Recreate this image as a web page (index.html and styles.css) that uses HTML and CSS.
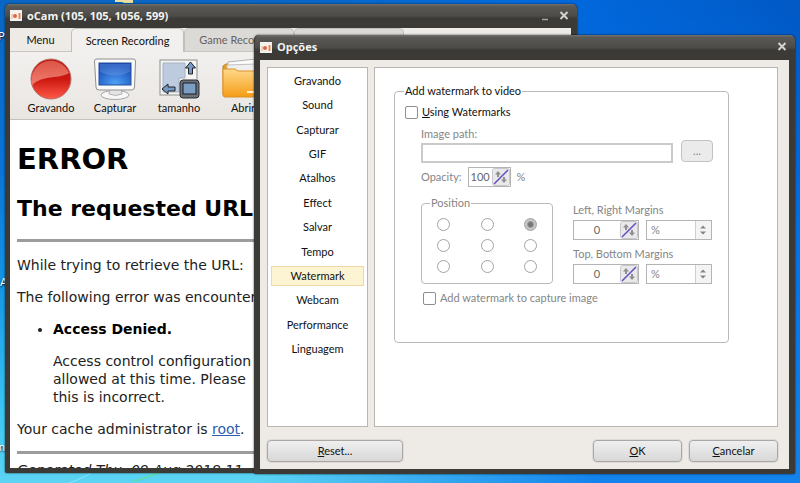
FILE: index.html
```
<!DOCTYPE html>
<html lang="pt">
<head>
    <meta charset="UTF-8">
    <meta name="viewport" content="width=device-width, initial-scale=1.0">
    <title>oCam</title>
    <link rel="stylesheet" href="styles.css">
</head>
<body>
    <div class="desktop">
        <svg class="desktop-swoosh" viewBox="0 0 200 14" aria-hidden="true">
            <path d="M64 14 Q84 7 92 0" stroke="#b8f4fc" stroke-width="1" fill="none" opacity=".6"/>
            <path d="M140 12 Q158 6 176 0" stroke="#62d9a8" stroke-width="2" fill="none"/>
        </svg>
        <svg class="desktop-folder" viewBox="0 0 18 3" aria-hidden="true">
            <path d="M0 0h18v3H9L7 2H0z" fill="#e9dfa0"/>
        </svg>
        <span class="desktop-label label-one">P</span>
        <span class="desktop-label label-two">A</span>
        <span class="desktop-label label-three">in</span>

        <!-- Main window -->
        <section class="window main-window">
            <header class="titlebar">
                <svg class="app-icon" viewBox="0 0 12 11" aria-hidden="true">
                    <rect width="12" height="11" fill="#f6f1ec"/>
                    <circle cx="5" cy="6" r="2" fill="#d9683c"/>
                    <path d="M2 4v5" stroke="#e0b09a"/>
                    <path d="M9.500 3v6" stroke="#e08a62" stroke-width="2"/>
                </svg>
                <h1 class="title">oCam (105, 105, 1056, 599)</h1>
                <button class="title-button" aria-label="Minimize">
                    <svg viewBox="0 0 10 10"><path d="M2 8.500h6" stroke="#a5a4a0" stroke-width="1.500"/></svg>
                </button>
                <button class="title-button" aria-label="Close">
                    <svg viewBox="0 0 10 10"><path d="M1.500 1l7 7M8.500 1l-7 7" stroke="#d4d3d0" stroke-width="2"/></svg>
                </button>
            </header>
            <div class="window-body">
                <nav class="tabs">
                    <button class="tab menu-tab">Menu</button>
                    <button class="tab active">Screen Recording</button>
                    <button class="tab inactive">Game Recording</button>
                    <button class="tab inactive" aria-label="Audio Recording"></button>
                </nav>
                <div class="toolbar">
                    <button class="tool">
                        <svg viewBox="0 0 42 42" aria-hidden="true">
                            <defs>
                                <linearGradient id="redBase" x1="0" y1="0" x2="0" y2="1">
                                    <stop offset="0" stop-color="#b81a14"/>
                                    <stop offset=".5" stop-color="#cc1710"/>
                                    <stop offset="1" stop-color="#ff5a48"/>
                                </linearGradient>
                                <linearGradient id="redShine" x1="0" y1="0" x2="0" y2="1">
                                    <stop offset="0" stop-color="#dc5546"/>
                                    <stop offset="1" stop-color="#f07c6e"/>
                                </linearGradient>
                            </defs>
                            <circle cx="21" cy="21" r="20" fill="url(#redBase)" stroke="#b9726c"/>
                            <path d="M2 27A19.500 19.500 0 0 1 39 15Q34 18 24 19Q9 20 2 27z" fill="url(#redShine)"/>
                        </svg>
                        Gravando
                    </button>
                    <button class="tool">
                        <svg viewBox="0 0 42 42" aria-hidden="true">
                            <defs>
                                <radialGradient id="screen" cx=".5" cy=".9" r=".8">
                                    <stop offset="0" stop-color="#4fa0f4"/>
                                    <stop offset="1" stop-color="#1448b4"/>
                                </radialGradient>
                            </defs>
                            <ellipse cx="21" cy="37" rx="14" ry="4.500" fill="#f7f7f7" stroke="#a6a6a6"/>
                            <path d="M16 30h11l1 6q-6 3-13 0z" fill="#e4e4e4" stroke="#b5b5b5"/>
                            <path d="M3 1h36q2.500 0 2.500 2l-1 26q0 3-3 3H5q-3 0-3-3L.5 3q0-2 2.500-2z" fill="#fafafa" stroke="#8f8f8f"/>
                            <rect x="5" y="5" width="32" height="22" fill="url(#screen)" stroke="#27509b"/>
                            <path d="M6 6h30v8Q21 21 6 14z" fill="#7ba9ee" opacity=".35"/>
                        </svg>
                        Capturar
                    </button>
                    <button class="tool">
                        <svg viewBox="0 0 42 42" aria-hidden="true">
                            <rect x="2" y="2" width="37" height="35" fill="#f4f4f3" stroke="#8d8d8d"/>
                            <path d="M5 5h22v15h-6v14H5z" fill="#bccbdd" stroke="#a6b2c0"/>
                            <path d="M32.500 4l5 6h-3v6h-4v-6h-3z" fill="#7599c1" stroke="#20242a"/>
                            <path d="M4 31l6-5v3h7v4h-7v3z" fill="#7599c1" stroke="#20242a"/>
                            <rect x="22" y="22" width="19" height="18" rx="3" fill="#6b7178" stroke="#292c30"/>
                            <rect x="25" y="25" width="13" height="11" fill="#7c9dc4" stroke="#1b1e22"/>
                        </svg>
                        tamanho
                    </button>
                    <button class="tool">
                        <svg viewBox="0 0 42 42" aria-hidden="true">
                            <defs>
                                <linearGradient id="folder" x1="0" y1="0" x2="0" y2="1">
                                    <stop offset="0" stop-color="#ffd98a"/>
                                    <stop offset="1" stop-color="#f59c16"/>
                                </linearGradient>
                            </defs>
                            <path d="M1 8l3-2h7l3 3h26v29H3q-2 0-2-2z" fill="#e99b22" stroke="#c9811a"/>
                            <path d="M6 4l28-3 3 12H6z" fill="#fbfbfb" stroke="#b3b3b3"/>
                            <path d="M5 7l30-1v8H5z" fill="#efefef" stroke="#c0c0c0"/>
                            <path d="M1 11h12l3 2h25v25q0 1-2 1H3q-2 0-2-2z" fill="url(#folder)" stroke="#dc9124"/>
                            <path d="M25 34h13" stroke="#fff0c8" stroke-width="2"/>
                        </svg>
                        Abrir
                    </button>
                </div>
                <article class="error-page">
                    <h2 class="error-title">ERROR</h2>
                    <h3 class="error-subtitle">The requested URL could not be retrieved</h3>
                    <hr>
                    <p>While trying to retrieve the URL:</p>
                    <p>The following error was encountered:</p>
                    <ul>
                        <li>
                            <strong>Access Denied.</strong>
                            <p>Access control configuration<br>allowed at this time. Please<br>this is incorrect.</p>
                        </li>
                    </ul>
                    <p>Your cache administrator is <a href="#">root</a>.</p>
                    <hr>
                    <div class="generated">Generated Thu, 09 Aug 2018 11:</div>
                </article>
            </div>
        </section>

        <!-- Options dialog -->
        <section class="window options-window">
            <header class="titlebar">
                <svg class="app-icon" viewBox="0 0 12 11" aria-hidden="true">
                    <rect width="12" height="11" fill="#f6f1ec"/>
                    <circle cx="5" cy="6" r="2" fill="#d9683c"/>
                    <path d="M2 4v5" stroke="#e0b09a"/>
                    <path d="M9.500 3v6" stroke="#e08a62" stroke-width="2"/>
                </svg>
                <h1 class="title">Opções</h1>
                <button class="title-button" aria-label="Close">
                    <svg viewBox="0 0 10 10"><path d="M1.500 1l7 7M8.500 1l-7 7" stroke="#d4d3d0" stroke-width="2"/></svg>
                </button>
            </header>
            <form class="window-body options-body">
                <div class="options-main">
                    <nav class="sidebar">
                        <a href="#">Gravando</a>
                        <a href="#">Sound</a>
                        <a href="#">Capturar</a>
                        <a href="#">GIF</a>
                        <a href="#">Atalhos</a>
                        <a href="#">Effect</a>
                        <a href="#">Salvar</a>
                        <a href="#">Tempo</a>
                        <a href="#" class="selected">Watermark</a>
                        <a href="#">Webcam</a>
                        <a href="#">Performance</a>
                        <a href="#">Linguagem</a>
                    </nav>
                    <div class="panel">
                        <fieldset class="group watermark">
                            <legend>Add watermark to video</legend>
                            <label class="check"><input type="checkbox"><span><u>U</u>sing Watermarks</span></label>
                            <div class="settings">
                                <label for="path">Image path:</label>
                                <div class="path-row">
                                    <input type="text" id="path" class="field" disabled>
                                    <button type="button" class="button browse" disabled>...</button>
                                </div>
                                <div class="opacity-row">
                                    <label for="opacity">Opacity:</label>
                                    <div class="spinner small">
                                        <input type="text" id="opacity" value="100" disabled>
                                        <svg viewBox="0 0 18 18" aria-hidden="true"><use href="#spin"/></svg>
                                    </div>
                                    <span>%</span>
                                </div>
                                <div class="placement">
                                    <fieldset class="group position" disabled>
                                        <legend>Position</legend>
                                        <input type="radio" name="position" aria-label="Top left">
                                        <input type="radio" name="position" aria-label="Top center">
                                        <input type="radio" name="position" aria-label="Top right" checked>
                                        <input type="radio" name="position" aria-label="Middle left">
                                        <input type="radio" name="position" aria-label="Middle center">
                                        <input type="radio" name="position" aria-label="Middle right">
                                        <input type="radio" name="position" aria-label="Bottom left">
                                        <input type="radio" name="position" aria-label="Bottom center">
                                        <input type="radio" name="position" aria-label="Bottom right">
                                    </fieldset>
                                    <div class="margins">
                                        <label for="margin-x">Left, Right Margins</label>
                                        <div class="margin-row">
                                            <div class="spinner">
                                                <input type="text" id="margin-x" value="0" disabled>
                                                <svg viewBox="0 0 18 18" aria-hidden="true"><use href="#spin"/></svg>
                                            </div>
                                            <div class="unit">
                                                <select aria-label="Left, right unit" disabled><option>%</option></select>
                                                <svg viewBox="0 0 16 18" aria-hidden="true"><use href="#arrows"/></svg>
                                            </div>
                                        </div>
                                        <label for="margin-y">Top, Bottom Margins</label>
                                        <div class="margin-row">
                                            <div class="spinner">
                                                <input type="text" id="margin-y" value="0" disabled>
                                                <svg viewBox="0 0 18 18" aria-hidden="true"><use href="#spin"/></svg>
                                            </div>
                                            <div class="unit">
                                                <select aria-label="Top, bottom unit" disabled><option>%</option></select>
                                                <svg viewBox="0 0 16 18" aria-hidden="true"><use href="#arrows"/></svg>
                                            </div>
                                        </div>
                                    </div>
                                </div>
                                <label class="check"><input type="checkbox" disabled><span>Add watermark to capture image</span></label>
                            </div>
                        </fieldset>
                    </div>
                </div>
                <footer class="actions">
                    <button type="button" class="button reset"><span><u>R</u>eset...</span></button>
                    <button type="button" class="button"><span><u>O</u>K</span></button>
                    <button type="button" class="button"><span><u>C</u>ancelar</span></button>
                </footer>
            </form>
        </section>
    </div>

    <!-- Shared control icons -->
    <svg class="symbols" aria-hidden="true">
        <symbol id="spin" viewBox="0 0 18 18">
            <rect x=".5" y=".5" width="17" height="17" rx="2" fill="#e9e8ea" stroke="#c8c8cc"/>
            <path d="M6 3l3 3.500H7V9H5V6.500H3zM12 15l-3-3.500h2V9h2v2.500h2z" fill="#8f8f8f"/>
            <path d="M2 16L16 2" stroke="#6a50c4" stroke-width="1.600"/>
        </symbol>
        <symbol id="arrows" viewBox="0 0 16 18">
            <path d="M0 0h16v18H0z" fill="#f4f4f4"/>
            <path d="M.5 0v18" stroke="#cfcfcf"/>
            <path d="M8 4.500l3 3H5zM8 13.500l3-3H5z" fill="#858585"/>
        </symbol>
    </svg>
</body>
</html>
```

FILE: styles.css
```
* {
    box-sizing: border-box;
}
body {
    margin: 0;
    font-family: Lato, "Open Sans", sans-serif;
    font-size: 11px;
    line-height: 16px;
    color: #111;
}
button, input, select {
    font: inherit;
    color: inherit;
    margin: 0;
}
/* Desktop */
.desktop {
    position: relative;
    height: 100vh;
    overflow: hidden;
    background:
        linear-gradient(to right, transparent 32%, rgba(0, 110, 235, 0.8) 75%),
        linear-gradient(#0966c4, #0a74d6 35%, #1597e6 60%, #3cc4f2 85%, #5cd4f3);
}
.desktop::before {
    content: "";
    position: absolute;
    inset: 0;
    background: linear-gradient(to right, transparent 65%, rgba(0, 60, 150, 0.4));
    -webkit-mask-image: linear-gradient(#000, transparent 50%);
    mask-image: linear-gradient(#000, transparent 50%);
}
.desktop-swoosh {
    position: absolute;
    left: 0;
    bottom: 0;
    width: 200px;
    height: 12px;
}
.desktop-folder {
    position: absolute;
    left: 115px;
    top: 0;
    width: 18px;
    height: 3px;
}
.desktop-label {
    position: absolute;
    color: white;
    text-shadow: 0 1px 2px #000;
}
.label-one {
    left: -2px;
    top: 28px;
}
.label-two {
    left: 0;
    top: 274px;
}
.label-three {
    left: -4px;
    top: 439px;
}
.symbols {
    position: absolute;
    width: 0;
    height: 0;
}
/* Windows */
.window {
    position: absolute;
    display: flex;
    flex-direction: column;
    padding: 0 6px 5px 5px;
    background: #3b3a36;
    border-radius: 5px 5px 2px 2px;
    box-shadow: 0 0 2px rgba(0, 0, 0, 0.8);
}
.main-window {
    left: 5px;
    top: 4px;
    right: 223px;
    bottom: 10px;
}
.options-window {
    left: 254px;
    top: 35px;
    right: 5px;
    bottom: 9px;
    padding-left: 6px;
}
.titlebar {
    display: flex;
    align-items: center;
    flex: none;
    gap: 5px;
    height: 24px;
    margin: 0 -6px 0 -5px;
    padding: 0 6px 1px 5px;
    border-radius: 5px 5px 0 0;
    background: linear-gradient(#72716d, #5a5955 10%, #4c4b47 50%, #3b3a36 60%, #3b3a36);
}
.options-window .titlebar {
    height: 25px;
}
.app-icon {
    width: 12px;
    height: 11px;
}
.title {
    flex: 1;
    margin: 0;
    font-family: "Open Sans", sans-serif;
    font-size: 11px;
    line-height: 16px;
    color: #f4f4f2;
}
.title-button {
    width: 14px;
    height: 16px;
    padding: 2px;
    border: none;
    background: none;
}
.title-button svg {
    display: block;
    width: 10px;
    height: 10px;
}
.window-body {
    flex: 1;
    min-height: 0;
    overflow: hidden;
    background: #eeebe7;
}
/* Tabs and toolbar */
.tabs {
    display: flex;
    height: 24px;
    border-bottom: 1px solid #c9c6c2;
}
.tab {
    width: 110px;
    padding: 0;
    border: 1px solid #c2bfbb;
    border-bottom: none;
    border-radius: 5px 5px 0 0;
    background: #dcdad7;
    color: #66625f;
}
.tab.menu-tab {
    width: 61px;
    border: none;
    background: none;
    color: #111;
}
.tab.active {
    height: 24px;
    width: 113px;
    background: #f2f0ee;
    color: #111;
}
.toolbar {
    display: flex;
    height: 68px;
    padding: 6px 9px 0;
    border-bottom: 1px solid #c4c2be;
    background: linear-gradient(#f2f0ee, #e9e6e2);
}
.tool {
    display: flex;
    flex-direction: column;
    align-items: center;
    width: 64px;
    padding: 0;
    border: none;
    background: none;
}
.tool svg {
    width: 42px;
    height: 42px;
}
/* Proxy error page */
.error-page {
    height: 100%;
    padding: 20px 7px;
    background: white;
    font-family: Verdana, "DejaVu Sans", sans-serif;
    font-size: 14px;
    line-height: 18px;
    white-space: nowrap;
    color: #222;
}
.error-title {
    margin: 0 0 17px;
    font-size: 29px;
    line-height: 38px;
    color: black;
}
.error-subtitle {
    margin: 0 0 16px;
    font-size: 22px;
    line-height: 28px;
    color: black;
}
.error-page hr {
    height: 3px;
    margin: 12px 0 7px;
    border: none;
    background: #9c9c9c;
}
.error-page p {
    margin: 14px 0 13px;
}
.error-page ul {
    margin: 14px 0;
    padding-left: 36px;
}
.error-page strong {
    color: black;
}
.error-page a {
    color: #2a5db0;
}
.generated {
    font-style: italic;
}
/* Options dialog */
.options-body {
    display: flex;
    flex-direction: column;
    padding: 7px 11px 7px 7px;
}
.options-main {
    display: flex;
    flex: 1;
    gap: 6px;
    min-height: 0;
}
.sidebar {
    display: flex;
    flex-direction: column;
    justify-content: space-between;
    width: 101px;
    padding: 3px 3px 67px;
    border: 1px solid #b9b6b2;
    background: white;
}
.sidebar a {
    height: 20px;
    border: 1px solid transparent;
    line-height: 18px;
    text-align: center;
    text-decoration: none;
    color: #111;
}
.sidebar .selected {
    background: #fdf4d3;
    border-color: #ecd9a4;
}
.panel {
    flex: 1;
    padding: 15px 48px 0 19px;
    border: 1px solid #b9b6b2;
    background: white;
}
.group {
    margin: 0;
    border: 1px solid #bbb9b9;
    border-radius: 4px;
}
.group legend {
    padding: 0 1px;
}
.watermark {
    height: 260px;
    padding: 5px 10px 0;
}
.watermark > legend {
    margin-left: -1px;
}
.check {
    display: flex;
    align-items: center;
    gap: 4px;
}
input[type="checkbox"], input[type="radio"] {
    appearance: none;
    width: 13px;
    height: 13px;
    border: 1px solid #8e8e8e;
    border-radius: 2px;
    background: white;
}
input[type="radio"] {
    border-color: #a2a2a2;
    border-radius: 50%;
}
input[type="radio"]:checked {
    background: radial-gradient(#777 0 2px, #c6c6c6 4px);
}
.settings {
    padding: 6px 5px 0 16px;
    color: #858585;
}
.settings label {
    display: block;
}
.path-row {
    display: flex;
    gap: 8px;
    height: 25px;
}
.field {
    flex: 1;
    min-width: 0;
    height: 20px;
    margin-top: 1px;
    border: 2px solid #cbc9c9;
    background: white;
}
.button {
    width: 89px;
    height: 22px;
    padding: 0;
    border: 1px solid #a9a8a6;
    border-radius: 4px;
    background: linear-gradient(#efefef, #d8d8d8);
    box-shadow: 0 0 0 1px #dddad7;
}
.browse {
    width: 32px;
    margin-top: -2px;
    border-color: #c2c2c2;
    background: #ebebeb;
    box-shadow: none;
}
.opacity-row {
    display: flex;
    align-items: center;
    gap: 6px;
}
.spinner, .unit {
    display: flex;
    width: 66px;
    height: 20px;
    border: 1px solid #b4b4b4;
    background: white;
}
.spinner.small {
    width: 43px;
}
.spinner input {
    flex: 1;
    width: 0;
    min-width: 0;
    padding: 0;
    border: none;
    background: none;
    text-align: center;
    color: #666;
}
.spinner svg {
    width: 18px;
    height: 18px;
}
.unit select {
    appearance: none;
    flex: 1;
    min-width: 0;
    padding: 0 4px;
    border: none;
    background: none;
    opacity: 1;
    color: #858585;
}
.unit svg {
    width: 16px;
    height: 18px;
}
.placement {
    display: flex;
    align-items: flex-start;
    gap: 20px;
    margin: 8px 0 0;
}
.position {
    display: grid;
    grid-template-columns: repeat(3, 13px);
    justify-content: space-between;
    align-content: start;
    row-gap: 8px;
    width: 132px;
    height: 89px;
    padding: 7px 15px 0;
}
.position legend {
    margin-left: -7px;
}
.margins {
    display: flex;
    flex-direction: column;
    padding-top: 7px;
}
.margin-row {
    display: flex;
    gap: 7px;
    margin: 2px 0 6px;
}
.settings .check {
    display: flex;
    margin-left: 2px;
}
.actions {
    display: flex;
    gap: 7px;
    padding-top: 13px;
}
.actions .reset {
    width: 136px;
    margin-right: auto;
}
```
